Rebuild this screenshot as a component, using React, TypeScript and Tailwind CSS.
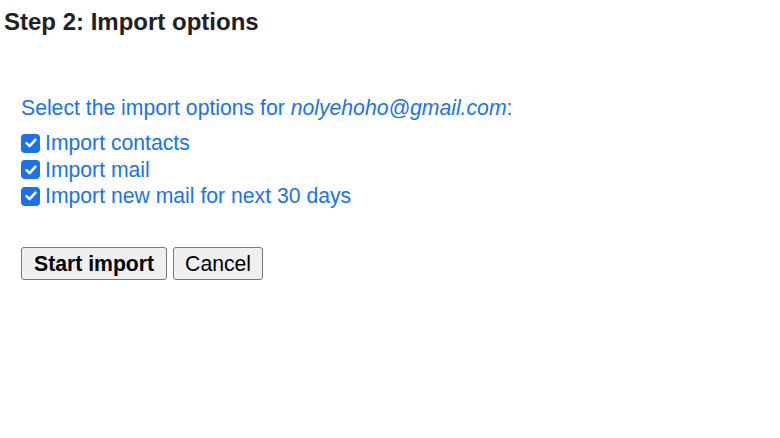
import React from "react";

const CheckRow: React.FC<{ label: string }> = ({ label }) => (
  <label className="flex items-center h-[26.5px]">
    <span className="w-[19px] h-[19px] rounded-[4px] bg-[#1a73e8] flex items-center justify-center shrink-0">
      <svg width="14" height="14" viewBox="0 0 14 14">
        <path d="M2.5 7.2 L5.6 10.2 L11.5 3.6" stroke="white" strokeWidth="2.5" fill="none" strokeLinecap="round" strokeLinejoin="round" />
      </svg>
    </span>
    <span className="ml-[5px]">{label}</span>
  </label>
);

export default function App() {
  return (
    <div className="w-[780px] h-[438px] bg-white font-['Liberation_Sans',Arial,sans-serif] text-[21.2px]">
      <h2 className="pl-[4px] pt-[8px] text-[24px] font-bold text-[#202124] leading-[28px]">
        Step 2: Import options
      </h2>
      <div className="pl-[21px] pt-[59px] text-[#1a73e8]">
        <p className="leading-[26px]">
          Select the import options for <i>nolyehoho@gmail.com</i>:
        </p>
        <div className="mt-[9px]">
          <CheckRow label="Import contacts" />
          <CheckRow label="Import mail" />
          <CheckRow label="Import new mail for next 30 days" />
        </div>
        <div className="flex gap-[6px] mt-[37px] text-black">
          <button className="h-[33px] px-[12px] bg-[#efefef] border border-[#777] rounded-[3px] font-bold">
            Start import
          </button>
          <button className="h-[33px] px-[11px] bg-[#efefef] border border-[#777] rounded-[3px]">
            Cancel
          </button>
        </div>
      </div>
    </div>
  );
}
